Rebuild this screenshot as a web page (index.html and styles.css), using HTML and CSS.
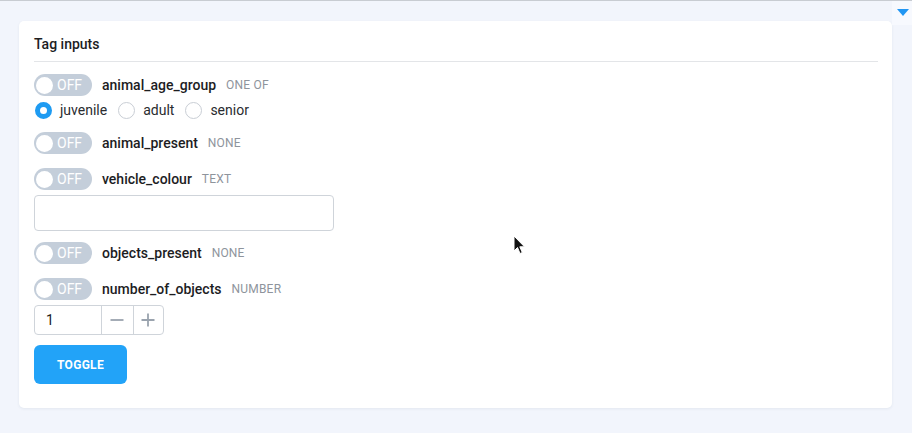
FILE: index.html
```html
<!DOCTYPE html>
<html>
<head>
<meta charset="utf-8">
<link rel="stylesheet" href="styles.css">
</head>
<body>
<div class="topline"></div>
<div class="corner"><svg width="12" height="7" viewBox="0 0 12 7"><path d="M0 0H12L6 7Z" fill="#2196f3"/></svg></div>
<div class="card">
  <div class="card-title">Tag inputs</div>
  <div class="items">
    <div class="item">
      <div class="row"><span class="toggle"><span class="knob"></span>OFF</span><span class="name">animal_age_group</span><span class="type">ONE OF</span></div>
      <div class="radios">
        <label class="radio"><span class="dot on"></span>juvenile</label>
        <label class="radio"><span class="dot"></span>adult</label>
        <label class="radio"><span class="dot"></span>senior</label>
      </div>
    </div>
    <div class="item">
      <div class="row"><span class="toggle"><span class="knob"></span>OFF</span><span class="name">animal_present</span><span class="type">NONE</span></div>
    </div>
    <div class="item">
      <div class="row"><span class="toggle"><span class="knob"></span>OFF</span><span class="name">vehicle_colour</span><span class="type">TEXT</span></div>
      <div class="textbox"></div>
    </div>
    <div class="item">
      <div class="row"><span class="toggle"><span class="knob"></span>OFF</span><span class="name">objects_present</span><span class="type">NONE</span></div>
    </div>
    <div class="item">
      <div class="row"><span class="toggle"><span class="knob"></span>OFF</span><span class="name">number_of_objects</span><span class="type">NUMBER</span></div>
      <div class="number">
        <span class="num-val">1</span>
        <span class="num-btn"><svg width="14" height="14" viewBox="0 0 14 14"><path d="M0.5 7H13.5" stroke="#9aa3ae" stroke-width="1.8"/></svg></span>
        <span class="num-btn"><svg width="14" height="14" viewBox="0 0 14 14"><path d="M0.5 7H13.5M7 0.5V13.5" stroke="#9aa3ae" stroke-width="1.8"/></svg></span>
      </div>
    </div>
    <button class="btn">TOGGLE</button>
  </div>
</div>
<svg class="cursor" width="14" height="20" viewBox="0 0 14 20"><path d="M1 1V16L4.5 12.5L7 18.5L9.3 17.5L6.8 11.8H11.5Z" fill="#111" stroke="#fff" stroke-width="1"/></svg>
</body>
</html>
```
FILE: styles.css
```css
* { box-sizing: border-box; }
html, body { margin: 0; padding: 0; }
body {
  width: 912px;
  height: 433px;
  background: #f2f5fc;
  font-family: Roboto, "Liberation Sans", sans-serif;
  position: relative;
  overflow: hidden;
  padding: 21px 20px 0 19px;
}
.topline {
  position: absolute;
  left: 0; top: 0; right: 0;
  height: 1px;
  background: #c8ccd2;
}
.corner {
  position: absolute;
  right: 0; top: 1px;
  width: 20px; height: 24px;
  background: #f7f9fe;
  display: flex;
  justify-content: center;
  padding-top: 8px;
  padding-left: 2px;
}
.corner svg { display: block; }
.card {
  width: 873px;
  height: 387px;
  background: #fff;
  border-radius: 5px;
  box-shadow: 0 1px 3px rgba(30, 50, 90, 0.07);
  padding: 15px 14px 0 15px;
}
.card-title {
  font-size: 14px;
  font-weight: 500;
  color: #1d1d1f;
  line-height: 16px;
  padding-bottom: 9px;
  border-bottom: 1px solid #e3e5e8;
}
.items {
  display: flex;
  flex-direction: column;
  align-items: flex-start;
  gap: 10px;
  padding-top: 10px;
}
.item { display: flex; flex-direction: column; align-items: flex-start; }
.row {
  height: 26px;
  display: flex;
  align-items: center;
}
.toggle {
  width: 58px;
  height: 22px;
  border-radius: 11px;
  background: #c4ceda;
  display: flex;
  align-items: center;
  padding-left: 2px;
  color: #fff;
  font-size: 14px;
  gap: 4px;
}
.knob {
  width: 17px;
  height: 17px;
  border-radius: 50%;
  background: #fff;
}
.name {
  margin-left: 10px;
  font-size: 14px;
  font-weight: 500;
  color: #1d1d1f;
}
.type {
  margin-left: 10px;
  font-size: 12px;
  color: #8e949c;
  letter-spacing: 0.2px;
}
.radios {
  display: flex;
  align-items: center;
  height: 22px;
  padding-top: 2px;
  gap: 10px;
}
.radio {
  display: flex;
  align-items: center;
  gap: 8px;
  font-size: 14px;
  color: #2a2c30;
}
.dot {
  width: 17px;
  height: 17px;
  border-radius: 50%;
  border: 1px solid #c9ced5;
  background: #fff;
  margin-left: 1px;
}
.dot.on {
  border: 5px solid #1e9bf2;
}
.textbox {
  margin-top: 3px;
  margin-bottom: -1px;
  width: 300px;
  height: 36px;
  border: 1px solid #cfd4da;
  border-radius: 4px;
}
.number {
  margin-top: 3px;
  display: flex;
  height: 30px;
  border: 1px solid #cfd4da;
  border-radius: 4px;
  width: 130px;
}
.num-val {
  width: 68px;
  border-right: 1px solid #cfd4da;
  font-size: 14px;
  color: #222;
  padding-left: 11px;
  display: flex;
  align-items: center;
}
.num-btn {
  width: 31px;
  display: flex;
  align-items: center;
  justify-content: center;
}
.num-btn + .num-btn { border-left: 1px solid #cfd4da; }
.btn {
  width: 93px;
  height: 39px;
  border: none;
  border-radius: 6px;
  background: #22a3f8;
  color: #fff;
  font-family: Roboto, "Liberation Sans", sans-serif;
  font-size: 12px;
  font-weight: 700;
  letter-spacing: 0.3px;
  padding: 0;
}
.cursor {
  position: absolute;
  left: 513px;
  top: 235px;
}
```
